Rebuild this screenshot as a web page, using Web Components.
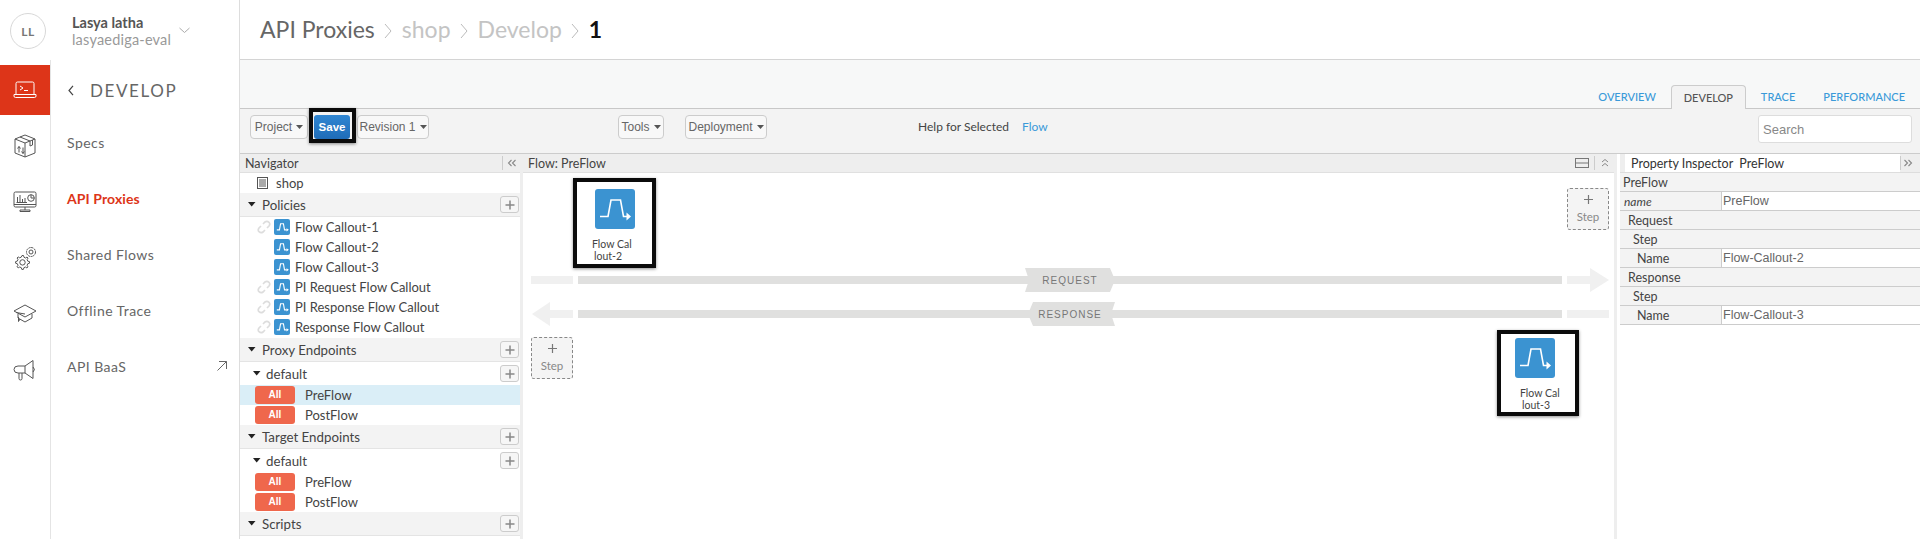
<!DOCTYPE html>
<html lang="en"><head><meta charset="utf-8"><title>API Proxies</title>
<style>
html,body{margin:0;padding:0;height:539px;overflow:hidden;background:#fff;font-family:Lato,"Liberation Sans",sans-serif;}
app-shell{height:539px}
</style></head><body>
<app-shell>
  <side-bar slot="side"></side-bar>
  <page-header slot="head"></page-header>
  <tab-band slot="head"></tab-band>
  <tool-bar slot="head"></tool-bar>
  <nav-panel slot="left"></nav-panel>
  <flow-panel slot="center"></flow-panel>
  <inspector-panel slot="right"></inspector-panel>
</app-shell>
<script>
function def(name,css,html){
  customElements.define(name,class extends HTMLElement{
    constructor(){super();const r=this.attachShadow({mode:'open'});
      r.innerHTML='<style>'+css+'</style>'+(typeof html==='function'?html(this):html);}
  });
}
const chev='<svg width="8" height="16" viewBox="0 0 8 16"><path d="M1 1L7 8L1 15" fill="none" stroke="#bbb" stroke-width="1"/></svg>';

def('app-shell',`:host{display:grid;grid-template-columns:240px 1fr;width:1920px;height:539px;overflow:hidden}
 .main{display:flex;flex-direction:column;min-width:0;height:539px}
 .panes{display:grid;grid-template-columns:280px 1097px 303px;height:385px;overflow:hidden;background:#eee}`,
 `<slot name="side"></slot><div class="main"><slot name="head"></slot>
  <div class="panes"><slot name="left"></slot><slot name="center"></slot><slot name="right"></slot></div></div>`);

const railIcons=[
 `<svg width="24" height="18" viewBox="0 0 24 18" fill="none" stroke="#fff" stroke-width="1"><path d="M3 13.5V2.5Q3 1 4.500 1H19.500Q21 1 21 2.500V13.500"/><path d="M1 13.500H23V15Q23 16.500 21.500 16.500H2.500Q1 16.500 1 15Z"/><path d="M7 5L10 7L7 9M11 9.500H15"/></svg>`,
 `<svg width="24" height="24" viewBox="0 0 24 24" fill="none" stroke="#555" stroke-width="1"><path d="M12 1L22 5V19L12 23L2 19V5Z"/><path d="M2 5L12 9L22 5M12 9V23M7 3L17 7V12L19.500 11V6"/><path d="M6 18.500V12.500L4.500 14.500M6 12.500L7.500 14.500M10 13.500V19.500L8.500 17.500M10 19.500L11.300 17.500"/></svg>`,
 `<svg width="24" height="22" viewBox="0 0 24 22" fill="none" stroke="#555" stroke-width="1"><rect x="1" y="1" width="22" height="15" rx="1.500"/><path d="M1 13.500H23M12 16V19M7 20.500H17V19H7Z"/><path d="M4.500 11V6M7 11V4M9.500 11V8M12 11V7M3.500 11.500H14"/><circle cx="18" cy="7" r="3.300"/><path d="M18 7V3.700M18 7H21.300"/></svg>`,
 `<svg width="24" height="24" viewBox="0 0 24 24" fill="none" stroke="#555" stroke-width="1"><path d="M9 9.500L10.500 9.500L11 11.300L12.600 12L14 11L15 12.100L14.100 13.600L14.800 15.200L16.500 15.600V17.200L14.800 17.700L14.100 19.300L15 20.800L13.900 21.900L12.400 21L10.900 21.700L10.400 23.400H8.800L8.300 21.700L6.700 21L5.200 21.900L4.100 20.800L5 19.300L4.300 17.700L2.600 17.200V15.600L4.300 15.100L5 13.500L4.100 12L5.200 10.900L6.700 11.800L8.300 11.100Z"/><circle cx="9.500" cy="16.400" r="2.700"/><circle cx="18" cy="6" r="4.500" stroke-dasharray="2 .6"/><circle cx="18" cy="6" r="2"/></svg>`,
 `<svg width="24" height="20" viewBox="0 0 24 20" fill="none" stroke="#555" stroke-width="1"><path d="M12 1L23 7L12 13L1 7Z"/><path d="M5 10V14L12 18L19 14V10"/><path d="M3 8.500L12 10M5.500 13V17.500M5.500 17.500L7 15"/></svg>`,
 `<svg width="24" height="22" viewBox="0 0 24 22" fill="none" stroke="#555" stroke-width="1"><path d="M5 7H12L20 1.500V19.500L12 14H5Q1 14 1 10.500Q1 7 5 7Z"/><path d="M12 7V14M20 8Q23 10.500 20 13M6 14V19.500Q6 21 7.500 21Q9 21 9 19.500V14"/></svg>`
];

def('side-bar',`:host{display:flex;flex-direction:column;width:240px;height:539px;box-sizing:border-box;border-right:1px solid #ddd;background:#fff;font-family:Lato,sans-serif;color:#555}
 .user{height:60px;flex:none;display:flex;align-items:flex-start;box-sizing:border-box;padding:13px 0 0 10px}
 .avatar{width:34px;height:34px;border:1px solid #d8d8d8;border-radius:50%;display:flex;align-items:center;justify-content:center;font-size:12px;font-weight:700;color:#777;letter-spacing:.5px}
 .who{margin-left:26px;margin-top:1px}
 .n{font-size:14.500px;font-weight:700;line-height:17px;color:#555}
 .o{font-size:14.500px;line-height:17px;color:#999;letter-spacing:.2px}
 .caret{margin:14px 0 0 8px}
 .body{display:flex;flex:1;min-height:0}
 .rail{width:50px;flex:none;border-right:1px solid #e4e4e4;padding-top:5px;display:flex;flex-direction:column;gap:6px}
 .ri{height:50px;display:flex;align-items:center;justify-content:center}
 .ri.on{background:#dd3519}
 .nav{flex:1;padding-top:5px;min-width:0}
 .title{height:49px;box-sizing:border-box;padding-top:1px;display:flex;align-items:center;padding-left:17px;font-size:17px;letter-spacing:1.6px;color:#666}
 .title svg{margin-right:16px}
 .item{height:56px;display:flex;align-items:center;justify-content:space-between;padding:0 12px 0 16px;font-size:14px;letter-spacing:.45px;color:#666}
 .item.on{color:#dd3519;font-weight:700;letter-spacing:.1px}`,
 `<div class="user"><div class="avatar">LL</div><div class="who"><div class="n">Lasya latha</div><div class="o">lasyaediga-eval</div></div>
  <svg class="caret" width="11" height="7" viewBox="0 0 11 7"><path d="M.5 1L5.500 5.500L10.500 1" fill="none" stroke="#aaa"/></svg></div>
  <div class="body"><div class="rail">${railIcons.map((s,i)=>`<div class="ri${i==0?' on':''}">${s}</div>`).join('')}</div>
  <div class="nav"><div class="title"><svg width="6" height="11" viewBox="0 0 6 11"><path d="M5 .8L1 5.500L5 10.200" fill="none" stroke="#444" stroke-width="1.200"/></svg><span>DEVELOP</span></div>
   <div class="item">Specs</div><div class="item on">API Proxies</div><div class="item">Shared Flows</div><div class="item">Offline Trace</div>
   <div class="item"><span>API BaaS</span><svg width="10" height="10" viewBox="0 0 10 10"><path d="M.5 9.500L9.500 .5M2 .5H9.500V8" fill="none" stroke="#666"/></svg></div></div></div>`);

def('page-header',`:host{display:flex;align-items:center;flex:none;border-bottom:1px solid #d4d4d4;padding-left:20px;font-family:Lato,sans-serif;font-size:23px;color:#666;background:#fff;padding-bottom:2px;box-sizing:content-box;height:57px}
 span{white-space:nowrap}.m{color:#c4c4c4}.k{color:#111;font-weight:700}
 svg{margin:5px 9.500px 0 9.500px;display:block}`,
 `<span>API Proxies</span>${chev}<span class="m">shop</span>${chev}<span class="m">Develop</span>${chev}<span class="k">1</span>`);

def('tab-band',`:host{display:flex;justify-content:flex-end;align-items:flex-end;height:49px;flex:none;box-sizing:border-box;background:#f7f8f8;border-bottom:1px solid #c8c8c8;font-family:Lato,sans-serif;font-size:11px;color:#3a9ad9;padding-right:15px;font-weight:500}
 a{display:block;height:23px;line-height:24px;white-space:nowrap}
 .on{width:75px;box-sizing:border-box;text-align:center;color:#555;background:#f3f3f3;border:1px solid #ccc;border-bottom:0;border-radius:4px 4px 0 0;margin:0 15px;position:relative;top:1px;height:24px;line-height:24px}
 .p{margin-left:28px}`,
 `<a>OVERVIEW</a><a class="on">DEVELOP</a><a>TRACE</a><a class="p">PERFORMANCE</a>`);

const btnCaret='<svg width="7" height="4" viewBox="0 0 7 4"><path d="M0 0H7L3.500 4Z" fill="#555"/></svg>';
def('tb-btn',`:host{display:flex;align-items:center;justify-content:center;gap:4px;height:24px;box-sizing:border-box;border:1px solid #ccc;border-radius:4px;background:#f8f8f8;color:#666;font:12px "Liberation Sans",sans-serif;white-space:nowrap;flex:none}`,
 `<slot></slot>${btnCaret}`);
def('save-btn',`:host{display:flex;position:relative;align-items:center;justify-content:center;height:24px;width:36px;box-sizing:border-box;border-radius:3px;background:linear-gradient(#2f86d2,#1f6cb8);color:#fff;font:bold 11.500px "Liberation Sans",sans-serif;flex:none;margin-left:6px;margin-right:7px}
 .mark{position:absolute;left:-5px;right:-6px;top:-7px;bottom:-4px;border:4px solid #0b0b0b;box-shadow:0 1px 3px rgba(0,0,0,.45)}`,
 `<slot></slot><span class="mark"></span>`);
def('tool-bar',`:host{display:flex;align-items:flex-start;height:45px;flex:none;box-sizing:border-box;background:#f3f3f3;border-bottom:1px solid #ccc;padding:6px 8px 0 10px;font-family:Lato,sans-serif}
 .help{margin-left:151px;font-size:12px;color:#444;line-height:24px;white-space:nowrap}
 .help a{color:#3a9ad9;margin-left:13px}
 .s{margin-left:auto;width:154px;height:28px;box-sizing:border-box;border:1px solid #ddd;border-radius:3px;background:#fff;color:#888;font:13px/27px "Liberation Sans",sans-serif;padding-left:4px}`,
 `<tb-btn style="width:58px">Project</tb-btn><save-btn>Save</save-btn><tb-btn style="width:72px">Revision 1</tb-btn>
  <tb-btn style="width:46px;margin-left:189px">Tools</tb-btn><tb-btn style="width:82px;margin-left:21px">Deployment</tb-btn>
  <div class="help">Help for Selected<a>Flow</a></div><div class="s">Search</div>`);

const plus='<svg width="10" height="10" viewBox="0 0 10 10"><path d="M5 .5V9.500M.5 5H9.500" stroke="#888" stroke-width="1.500"/></svg>';
const plusCss=`.plus{margin-left:auto;margin-right:1px;width:19px;height:17px;box-sizing:border-box;border:1px solid #ccc;border-radius:3px;background:#f6f6f6;display:flex;align-items:center;justify-content:center}`;
def('nav-band',`:host{display:flex;align-items:center;height:24px;box-sizing:border-box;background:#f3f3f3;border-bottom:1px solid #e4e4e4;padding-left:8px;font:13.300px Lato,sans-serif;color:#444}
 svg.t{margin-right:6px}${plusCss}`,`<svg class="t" width="8" height="5" viewBox="0 0 8 5"><path d="M0 0H7.500L3.700 4.500Z" fill="#222"/></svg><slot></slot><span class="plus">${plus}</span>`);
def('nav-sub',`:host{display:flex;align-items:center;height:23px;box-sizing:border-box;background:#fff;padding-left:13px;font:13.300px Lato,sans-serif;color:#444}
 svg.t{margin-right:5px}${plusCss}`,`<svg class="t" width="8" height="5" viewBox="0 0 8 5"><path d="M0 0H7.500L3.700 4.500Z" fill="#222"/></svg><slot></slot><span class="plus">${plus}</span>`);
def('policy-row',`:host{display:flex;align-items:center;height:20px;padding-left:17px;font:13px Lato,sans-serif;color:#444;white-space:nowrap}
 .l{width:14px;height:14px;margin-right:3px;flex:none}.i{width:16px;height:16px;background:#3b93d1;border-radius:2px;margin-right:5px;flex:none;display:block}`,
 h=>`<svg class="l" viewBox="0 0 14 14" fill="none" stroke="${h.hasAttribute('link')?'#ddd':'transparent'}" stroke-width="1.700"><path d="M6 4L8 2Q10 .5 12 2.300Q13.500 4 12 6L10 8M8 10L6 12Q4 13.500 2 11.700Q.5 10 2 8L4 6"/></svg>
 <svg class="i" viewBox="0 0 17 16"><path d="M3 11H5.800L7 4.500H10L11.200 11H13.500" fill="none" stroke="#fff" stroke-width="1.200"/><path d="M13.300 9.200L15.800 11L13.300 12.800Z" fill="#fff"/></svg><slot></slot>`);
def('flow-row',`:host{display:flex;align-items:center;height:20px;padding-left:15px;font:13px Lato,sans-serif;color:#444;white-space:nowrap}
 :host([sel]){background:#daeef7}
 .a{width:40px;height:18px;box-sizing:border-box;background:#ef674c;border-radius:3px;color:#fff;font:bold 10px/18px "Liberation Sans",sans-serif;text-align:center;margin-right:10px;flex:none}`,
 `<span class="a">All</span><slot></slot>`);
const dbl=d=>`<svg width="10" height="8" viewBox="0 0 10 8" fill="none" stroke="#888" stroke-width="1.100"><path d="${d}"/></svg>`;
def('nav-panel',`:host{display:block;width:280px;background:#fff;overflow:hidden;height:385px}
 .hd{display:flex;align-items:center;height:19px;box-sizing:border-box;background:#eeeeee;border-bottom:1px solid #e0e0e0;padding-left:5px;font:12.500px Lato,sans-serif;color:#444}
 .c{margin-left:auto;width:17px;height:14px;border-left:1px solid #ccc;display:flex;align-items:center;justify-content:center}
 .shop{display:flex;align-items:center;height:20px;padding-left:17px;font:13px Lato,sans-serif;color:#444;background:#fff}
 .shop svg{margin-right:8px}
 .g{height:1px}`,
 `<div class="hd">Navigator<span class="c">${dbl('M4.500 1L1.500 4L4.500 7M8.500 1L5.500 4L8.500 7')}</span></div>
  <div class="shop"><svg width="11" height="12" viewBox="0 0 11 12"><rect x=".5" y=".5" width="10" height="11" fill="#fff" stroke="#555"/><path d="M2 3H9M2 5H9M2 7H9M2 9H9" stroke="#555"/></svg>shop</div>
  <nav-band>Policies</nav-band>
  <policy-row link>Flow Callout-1</policy-row><policy-row>Flow Callout-2</policy-row><policy-row>Flow Callout-3</policy-row>
  <policy-row link>PI Request Flow Callout</policy-row><policy-row link>PI Response Flow Callout</policy-row><policy-row link>Response Flow Callout</policy-row>
  <div class="g"></div>
  <nav-band>Proxy Endpoints</nav-band><nav-sub>default</nav-sub><flow-row sel>PreFlow</flow-row><flow-row>PostFlow</flow-row>
  <nav-band>Target Endpoints</nav-band><nav-sub>default</nav-sub><flow-row>PreFlow</flow-row><flow-row>PostFlow</flow-row>
  <nav-band>Scripts</nav-band>`);

def('step-box',`:host{position:absolute;width:42px;height:42px;box-sizing:border-box;border:1px dashed #888;border-radius:3px;background:#f4f4f4;color:#888;text-align:center}
 svg{display:block;margin:6px auto 0}span{display:block;font:11.500px/18px Lato,sans-serif;margin-top:4px}`,`<svg width="9" height="9" viewBox="0 0 9 9"><path d="M4.500 0V9M0 4.500H9" stroke="#777" stroke-width="1.200"/></svg><span>Step</span>`);
def('policy-node',`:host{position:absolute;box-sizing:border-box;border:4px solid #0b0b0b;background:#fff;box-shadow:0 1px 3px rgba(0,0,0,.45);font:10.500px/12px Lato,sans-serif;color:#444}
 svg{display:block;width:40px;height:40px;margin-left:var(--ix);margin-top:var(--it);border-radius:3px;background:#3b93d1}
 p{margin:9px 0 0 var(--lx);width:38px;word-break:break-all;padding-left:2px;text-indent:-2px}`,
 `<svg viewBox="0 0 40 40"><path d="M5 27.500H13L16 11H25.500L28.500 27.500H34" fill="none" stroke="#fff" stroke-width="1.600"/><path d="M31.500 23.500L36 27.500L31.500 31.500Z" fill="#fff"/></svg><p><slot></slot></p>`);

def('flow-canvas',`:host{display:block;position:relative;height:366px;background:#fff;overflow:hidden}
 svg.f{position:absolute;left:0;top:0;width:1094px;height:366px}
 text{font:10px "Liberation Sans",sans-serif;letter-spacing:1px;fill:#777}`,
 `<svg class="f" viewBox="0 0 1094 366">
   <g fill="#f0f0f0"><rect x="8" y="103" width="42" height="8"/><path d="M1044 103H1067V95L1086 107L1067 119V111H1044Z"/>
   <path d="M9 141L27 129V137H50V145H27V153Z"/><rect x="1044" y="137" width="42" height="8"/></g>
   <g fill="#e0e0df"><rect x="55" y="103" width="984" height="8"/><rect x="55" y="137" width="984" height="8"/>
   <path d="M502 95H587L592 107L587 119H502L506 107Z"/><path d="M510 129H592L588 141L592 153H510L505 141Z"/></g>
   <text x="547" y="110.600" text-anchor="middle">REQUEST</text><text x="547" y="144.600" text-anchor="middle">RESPONSE</text>
  </svg>
  <step-box style="left:1044px;top:15px"></step-box><step-box style="left:8px;top:164px"></step-box>
  <policy-node style="left:50px;top:5px;width:83px;height:90px;--ix:18px;--it:7px;--lx:15px">Flow Callout-2</policy-node>
  <policy-node style="left:974px;top:157px;width:82px;height:86px;--ix:14px;--it:4px;--lx:19px">Flow Callout-3</policy-node>`);

def('flow-panel',`:host{display:block;height:385px;padding:0 3px;box-sizing:border-box;background:#eee}
 .hd{display:flex;align-items:center;height:19px;box-sizing:border-box;background:#eeeeee;padding-left:5px;font:12.500px Lato,sans-serif;color:#444;border-bottom:1px solid #e0e0e0}
 .r{margin-left:auto;display:flex;align-items:center;margin-right:5px}
 .d{width:1px;height:14px;background:#ccc;margin:0 6px 0 5px}`,
 `<div class="hd">Flow: PreFlow<span class="r"><svg width="14" height="10" viewBox="0 0 14 10"><rect x=".5" y=".5" width="13" height="9" fill="none" stroke="#777"/><path d="M0 5H14" stroke="#777"/></svg><span class="d"></span><svg width="8" height="10" viewBox="0 0 8 10" fill="none" stroke="#888"><path d="M1 4L4 1.500L7 4M1 8L4 5.500L7 8"/></svg></span></div>
  <flow-canvas></flow-canvas>`);

def('prop-row',`:host{display:flex;height:19px;box-sizing:border-box;background:#f3f3f3;border-bottom:1px solid #ccc;font:12.500px Lato,sans-serif;color:#444;white-space:nowrap}
 .k{box-sizing:border-box;width:102px;padding-left:var(--p,3px);line-height:19px;flex:none}
 :host([v]) .k{border-right:1px solid #ccc}
 :host([i]) .k{font-style:italic;font-size:12px}
 .v{flex:1;background:#fff;font:12.500px/18px "Liberation Sans",sans-serif;color:#666;padding-left:1px}`,
 h=>`<div class="k"><slot></slot></div>${h.hasAttribute('v')?`<div class="v">${h.getAttribute('v')}</div>`:''}`);
def('inspector-panel',`:host{display:block;height:385px;width:303px;background:#fff;padding-left:3px;box-sizing:border-box;overflow:hidden}
 .hd{display:flex;align-items:center;height:19px;box-sizing:border-box;background:#eee;padding-left:5px;border-bottom:1px solid #ddd}
 .w{display:flex;align-items:center;width:275px;height:18px;background:#fff;padding-left:6px;box-sizing:border-box;font:12.500px Lato,sans-serif;color:#333;white-space:pre}
 .c{width:14px;height:14px;border-left:1px solid #ccc;display:flex;align-items:center;justify-content:center}`,
 `<div class="hd"><div class="w">Property Inspector  PreFlow</div><span class="c">${dbl('M1.500 1L4.500 4L1.500 7M5.500 1L8.500 4L5.500 7')}</span></div>
  <prop-row>PreFlow</prop-row><prop-row i v="PreFlow" style="--p:4px">name</prop-row>
  <prop-row style="--p:8px">Request</prop-row><prop-row style="--p:13px">Step</prop-row><prop-row v="Flow-Callout-2" style="--p:17px">Name</prop-row>
  <prop-row style="--p:8px">Response</prop-row><prop-row style="--p:13px">Step</prop-row><prop-row v="Flow-Callout-3" style="--p:17px">Name</prop-row>`);
</script>
</body></html>
